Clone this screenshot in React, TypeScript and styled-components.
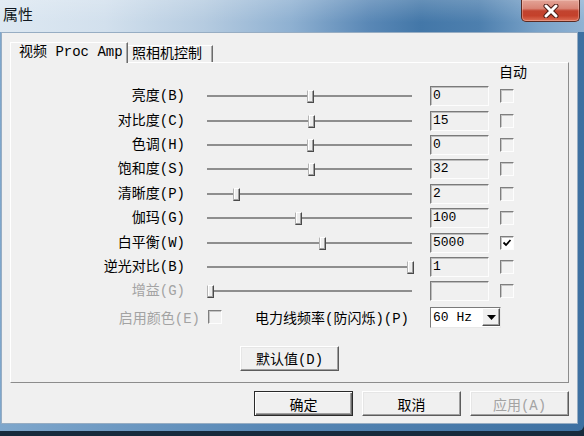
import React from 'react';
import styled, { createGlobalStyle } from 'styled-components';

const GlobalStyle = createGlobalStyle`
  html, body {
    margin: 0;
    padding: 0;
  }
  body {
    width: 584px;
    height: 436px;
    overflow: hidden;
    background: #172a3c;
    font-family: "Liberation Mono", "Noto Sans CJK SC", monospace;
    font-size: 14px;
    color: #000;
  }
  * {
    box-sizing: border-box;
  }
`;

type SliderRow = {
  label: string;
  pos: number; // thumb offset along the track, px
  value: string;
  auto?: boolean;
  disabled?: boolean;
};

const rows: SliderRow[] = [
  { label: '亮度(B)', pos: 100, value: '0' },
  { label: '对比度(C)', pos: 101, value: '15' },
  { label: '色调(H)', pos: 100, value: '0' },
  { label: '饱和度(S)', pos: 101, value: '32' },
  { label: '清晰度(P)', pos: 26, value: '2' },
  { label: '伽玛(G)', pos: 88, value: '100' },
  { label: '白平衡(W)', pos: 112, value: '5000', auto: true },
  { label: '逆光对比(B)', pos: 200, value: '1' },
  { label: '增益(G)', pos: 0, value: '', disabled: true },
];

export default function App() {
  return (
    <>
      <GlobalStyle />
      <Window>
        <TitleBar>
          <Title>属性</Title>
          <CloseButton>
            <svg width="18" height="14" viewBox="0 0 18 14">
              <path d="M4 2 L14 12 M14 2 L4 12" stroke="#4a1d16" strokeWidth="5" strokeLinecap="round" />
              <path d="M4 2 L14 12 M14 2 L4 12" stroke="#ffffff" strokeWidth="3" strokeLinecap="round" />
            </svg>
          </CloseButton>
        </TitleBar>
        <Frame>
          <Client>
            <TabRow>
              <Tab active>视频 Proc Amp</Tab>
              <Tab>照相机控制</Tab>
            </TabRow>
            <Panel>
              <AutoHeader>自动</AutoHeader>
              {rows.map((r) => (
                <Row key={r.label}>
                  <Label disabled={r.disabled}>{r.label}</Label>
                  <Slider>
                    <Thumb style={{ left: r.pos }} />
                  </Slider>
                  <Edit>{r.value}</Edit>
                  <Check checked={r.auto}>
                    {r.auto && (
                      <svg width="12" height="12" viewBox="0 0 12 12">
                        <path d="M2.5 5.5 L5 8 L9.5 3" stroke="#000" strokeWidth="1.8" fill="none" />
                      </svg>
                    )}
                  </Check>
                </Row>
              ))}
              <BottomRow>
                <ColorLabel>启用颜色(E)</ColorLabel>
                <Check style={{ marginLeft: 8 }} />
                <PowerLabel>电力线频率(防闪烁)(P)</PowerLabel>
                <Combo>
                  <ComboText>60 Hz</ComboText>
                  <DropButton>
                    <svg width="9" height="5" viewBox="0 0 9 5">
                      <path d="M0 0 H9 L4.5 5 Z" fill="#000" />
                    </svg>
                  </DropButton>
                </Combo>
              </BottomRow>
              <DefaultButton>默认值(D)</DefaultButton>
            </Panel>
            <ButtonRow>
              <Button primary>确定</Button>
              <Button>取消</Button>
              <Button disabled>应用(A)</Button>
            </ButtonRow>
          </Client>
        </Frame>
      </Window>
    </>
  );
}

const Window = styled.div`
  width: 584px;
  height: 431px;
  display: flex;
  flex-direction: column;
  background: linear-gradient(to right, #7fa7cc 0%, #5888b6 45%, #3d70a1 100%);
  border-bottom-right-radius: 6px;
  overflow: hidden;
`;

const TitleBar = styled.div`
  height: 32px;
  flex-shrink: 0;
  display: flex;
  justify-content: space-between;
  align-items: flex-start;
  background:
    linear-gradient(to bottom, rgba(255, 255, 255, 0.18), rgba(255, 255, 255, 0) 70%),
    linear-gradient(to right, #dde8f2 0%, #d2e0ed 18%, #b5cbe0 35%, #8eb0d1 50%, #5a88b6 63%, #4377a8 72%, #4d7fae 82%, #79a2c8 92%, #8fb2d3 100%);
`;

const Title = styled.div`
  padding: 5px 0 0 3px;
  font-family: "Noto Sans CJK SC", sans-serif;
  font-size: 15px;
  line-height: 18px;
  color: #101820;
`;

const CloseButton = styled.div`
  width: 59px;
  height: 22px;
  margin-right: 4px;
  display: flex;
  align-items: center;
  justify-content: center;
  border: 1px solid #5a2a22;
  border-top: none;
  border-radius: 0 0 5px 5px;
  background: linear-gradient(to bottom, #e3a497 0%, #d98576 40%, #c2432f 52%, #c4412b 75%, #dc6e55 100%);
  box-shadow: inset 0 0 0 1px rgba(255, 220, 210, 0.35);
`;

const Frame = styled.div`
  flex: 1;
  display: flex;
  padding: 0 6px 7px 1px;
`;

const Client = styled.div`
  flex: 1;
  display: flex;
  flex-direction: column;
  background: #f0f0f0;
  border: 1px solid #97adc3;
  padding: 9px 8px 0 8px;
`;

const TabRow = styled.div`
  display: flex;
  align-items: flex-end;
`;

const Tab = styled.div<{ active?: boolean }>`
  height: ${(p) => (p.active ? 21 : 17)}px;
  margin-bottom: ${(p) => (p.active ? -1 : 0)}px;
  width: ${(p) => (p.active ? 118 : 85)}px;
  padding-left: ${(p) => (p.active ? 8 : 4)}px;
  position: relative;
  z-index: ${(p) => (p.active ? 1 : 0)};
  background: #f0f0f0;
  border-top: 1px solid #fff;
  border-left: ${(p) => (p.active ? '1px solid #fff' : 'none')};
  border-right: 1px solid #6b6b6b;
  box-shadow: inset -1px 0 0 #a8a8a8;
  font-size: 14px;
  line-height: ${(p) => (p.active ? 19 : 16)}px;
  white-space: nowrap;
`;

const Panel = styled.div`
  width: 559px;
  height: 321px;
  display: flex;
  flex-direction: column;
  border: 1px solid;
  border-color: #fff #8c8c8c #8c8c8c #fff;
`;

const AutoHeader = styled.div`
  height: 21px;
  margin-left: 488px;
  font-size: 14px;
  line-height: 21px;
  white-space: nowrap;
`;

const Row = styled.div`
  height: 24.4px;
  display: flex;
  align-items: center;
`;

const Label = styled.div<{ disabled?: boolean }>`
  width: 174px;
  text-align: right;
  white-space: nowrap;
  line-height: 16px;
  color: ${(p) => (p.disabled ? '#a3a3a3' : '#000')};
`;

const Slider = styled.div`
  width: 205px;
  height: 20px;
  margin-left: 22px;
  position: relative;
  background: linear-gradient(#8e8e8e, #8e8e8e) 0 9px / 100% 2px no-repeat;
`;

const Thumb = styled.div`
  position: absolute;
  top: 4px;
  width: 7px;
  height: 13px;
  background: #eeeeee;
  border-left: 1px solid #b4b4b4;
  border-top: 1px solid #fff;
  border-right: 1px solid #4a4a4a;
  border-bottom: 1px solid #4a4a4a;
  box-shadow: inset -1px -1px 0 #a0a0a0, inset 1px 0 0 #fff;
`;

const Edit = styled.div`
  width: 59px;
  height: 20px;
  margin-left: 18px;
  padding-left: 2px;
  border: 1px solid;
  border-color: #7a7a7a #fdfdfd #fdfdfd #7a7a7a;
  box-shadow: inset 1px 1px 0 #bdbdbd;
  background: #f0f0f0;
  font-size: 13px;
  line-height: 18px;
`;

const Check = styled.div<{ checked?: boolean }>`
  width: 14px;
  height: 14px;
  margin-left: 11px;
  flex-shrink: 0;
  display: flex;
  align-items: center;
  justify-content: center;
  border: 1px solid;
  border-color: #7e7e7e #fdfdfd #fdfdfd #7e7e7e;
  box-shadow: inset 1px 1px 0 #c4c4c4;
  background: ${(p) => (p.checked ? '#fff' : '#f2f2f2')};
`;

const BottomRow = styled.div`
  height: 27px;
  display: flex;
  align-items: center;
`;

const ColorLabel = styled.div`
  width: 189px;
  text-align: right;
  white-space: nowrap;
  color: #a3a3a3;
`;

const PowerLabel = styled.div`
  width: 175px;
  margin-left: 33px;
  white-space: nowrap;
`;

const Combo = styled.div`
  width: 71px;
  height: 21px;
  display: flex;
  align-items: center;
  border: 1px solid;
  border-color: #7a7a7a #e8e8e8 #e8e8e8 #7a7a7a;
  background: #fff;
`;

const ComboText = styled.div`
  flex: 1;
  padding-left: 2px;
  font-size: 13px;
`;

const DropButton = styled.div`
  width: 18px;
  height: 18px;
  display: flex;
  align-items: center;
  justify-content: center;
  background: #f0f0f0;
  border: 1px solid;
  border-color: #fff #505050 #505050 #fff;
  box-shadow: inset -1px -1px 0 #a0a0a0;
`;

const Button = styled.div<{ primary?: boolean; disabled?: boolean }>`
  width: 99px;
  height: 25px;
  display: flex;
  align-items: center;
  justify-content: center;
  background: #f0f0f0;
  border: 1px solid;
  border-color: ${(p) => (p.primary ? '#2a2a2a' : '#fff #5c5c5c #5c5c5c #fff')};
  box-shadow: ${(p) =>
    p.primary
      ? 'inset 1px 1px 0 #fff, inset -1px -1px 0 #6a6a6a, inset -2px -2px 0 #a0a0a0'
      : 'inset -1px -1px 0 #a0a0a0, inset 1px 1px 0 #e6e6e6'};
  font-size: 14px;
  color: ${(p) => (p.disabled ? '#a3a3a3' : '#000')};
  white-space: nowrap;
`;

const DefaultButton = styled(Button)`
  align-self: center;
  margin-top: 15px;
`;

const ButtonRow = styled.div`
  display: flex;
  justify-content: flex-end;
  gap: 9px;
  margin-top: 8px;
`;
